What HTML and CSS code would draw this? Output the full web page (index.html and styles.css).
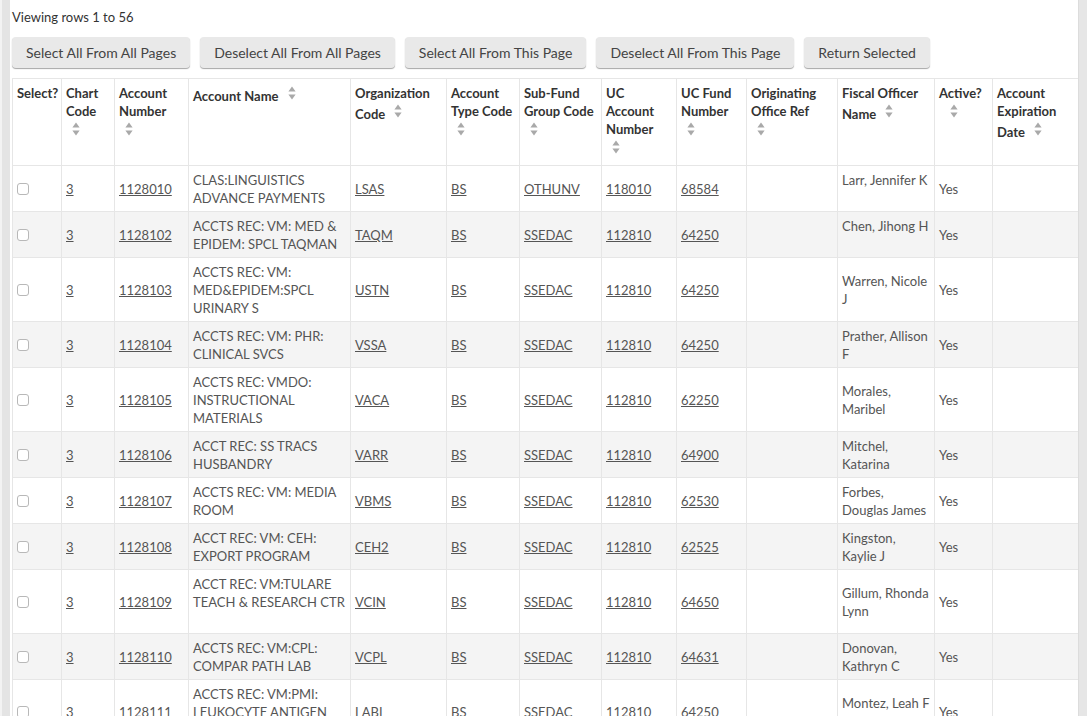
FILE: index.html
```html
<!DOCTYPE html>
<html>
<head>
<meta charset="utf-8">
<title>Account Lookup</title>
<link rel="stylesheet" href="styles.css">
</head>
<body>
<div class="page">
  <div class="edge-left"></div>
  <main class="main">
    <div class="viewing">Viewing rows 1 to 56</div>
    <div class="buttons">
      <button class="btn">Select All From All Pages</button>
      <button class="btn">Deselect All From All Pages</button>
      <button class="btn">Select All From This Page</button>
      <button class="btn">Deselect All From This Page</button>
      <button class="btn">Return Selected</button>
    </div>
    <table class="grid">
      <colgroup>
        <col class="w-sel"><col class="w-chart"><col class="w-acct"><col class="w-name"><col class="w-org"><col class="w-type"><col class="w-sub"><col class="w-ucacct"><col class="w-ucfund"><col class="w-orig"><col class="w-fo"><col class="w-act"><col class="w-exp">
      </colgroup>
      <thead>
        <tr>
          <th>Select?</th>
          <th>Chart<br>Code<br><svg class="sort" viewBox="0 0 8 14"><path d="M4 0.5 L7.6 5.4 H0.4 Z M0.4 8.6 H7.6 L4 13.5 Z"/></svg></th>
          <th>Account<br>Number<br><svg class="sort" viewBox="0 0 8 14"><path d="M4 0.5 L7.6 5.4 H0.4 Z M0.4 8.6 H7.6 L4 13.5 Z"/></svg></th>
          <th>Account Name <svg class="sort gap" viewBox="0 0 8 14"><path d="M4 0.5 L7.6 5.4 H0.4 Z M0.4 8.6 H7.6 L4 13.5 Z"/></svg></th>
          <th>Organization<br>Code <svg class="sort gap" viewBox="0 0 8 14"><path d="M4 0.5 L7.6 5.4 H0.4 Z M0.4 8.6 H7.6 L4 13.5 Z"/></svg></th>
          <th>Account<br>Type Code<br><svg class="sort" viewBox="0 0 8 14"><path d="M4 0.5 L7.6 5.4 H0.4 Z M0.4 8.6 H7.6 L4 13.5 Z"/></svg></th>
          <th>Sub-Fund<br>Group Code<br><svg class="sort" viewBox="0 0 8 14"><path d="M4 0.5 L7.6 5.4 H0.4 Z M0.4 8.6 H7.6 L4 13.5 Z"/></svg></th>
          <th>UC<br>Account<br>Number<br><svg class="sort" viewBox="0 0 8 14"><path d="M4 0.5 L7.6 5.4 H0.4 Z M0.4 8.6 H7.6 L4 13.5 Z"/></svg></th>
          <th>UC Fund<br>Number<br><svg class="sort" viewBox="0 0 8 14"><path d="M4 0.5 L7.6 5.4 H0.4 Z M0.4 8.6 H7.6 L4 13.5 Z"/></svg></th>
          <th>Originating<br>Office Ref<br><svg class="sort" viewBox="0 0 8 14"><path d="M4 0.5 L7.6 5.4 H0.4 Z M0.4 8.6 H7.6 L4 13.5 Z"/></svg></th>
          <th>Fiscal Officer<br>Name <svg class="sort gap" viewBox="0 0 8 14"><path d="M4 0.5 L7.6 5.4 H0.4 Z M0.4 8.6 H7.6 L4 13.5 Z"/></svg></th>
          <th>Active?<br><svg class="sort act" viewBox="0 0 8 14"><path d="M4 0.5 L7.6 5.4 H0.4 Z M0.4 8.6 H7.6 L4 13.5 Z"/></svg></th>
          <th>Account<br>Expiration<br>Date <svg class="sort gap" viewBox="0 0 8 14"><path d="M4 0.5 L7.6 5.4 H0.4 Z M0.4 8.6 H7.6 L4 13.5 Z"/></svg></th>
        </tr>
      </thead>
      <tbody>
        <tr>
          <td><input type="checkbox" class="cb"></td><td><a href="#">3</a></td><td><a href="#">1128010</a></td>
          <td>CLAS:LINGUISTICS<br>ADVANCE PAYMENTS</td><td><a href="#">LSAS</a></td><td><a href="#">BS</a></td><td><a href="#">OTHUNV</a></td><td><a href="#">118010</a></td><td><a href="#">68584</a></td><td></td>
          <td><div class="fo">Larr, Jennifer K</div></td><td>Yes</td><td></td>
        </tr>
        <tr>
          <td><input type="checkbox" class="cb"></td><td><a href="#">3</a></td><td><a href="#">1128102</a></td>
          <td>ACCTS REC: VM: MED &amp;<br>EPIDEM: SPCL TAQMAN</td><td><a href="#">TAQM</a></td><td><a href="#">BS</a></td><td><a href="#">SSEDAC</a></td><td><a href="#">112810</a></td><td><a href="#">64250</a></td><td></td>
          <td><div class="fo">Chen, Jihong H</div></td><td>Yes</td><td></td>
        </tr>
        <tr>
          <td><input type="checkbox" class="cb"></td><td><a href="#">3</a></td><td><a href="#">1128103</a></td>
          <td>ACCTS REC: VM:<br>MED&amp;EPIDEM:SPCL<br>URINARY S</td><td><a href="#">USTN</a></td><td><a href="#">BS</a></td><td><a href="#">SSEDAC</a></td><td><a href="#">112810</a></td><td><a href="#">64250</a></td><td></td>
          <td><div class="fo">Warren, Nicole<br>J</div></td><td>Yes</td><td></td>
        </tr>
        <tr>
          <td><input type="checkbox" class="cb"></td><td><a href="#">3</a></td><td><a href="#">1128104</a></td>
          <td>ACCTS REC: VM: PHR:<br>CLINICAL SVCS</td><td><a href="#">VSSA</a></td><td><a href="#">BS</a></td><td><a href="#">SSEDAC</a></td><td><a href="#">112810</a></td><td><a href="#">64250</a></td><td></td>
          <td><div class="fo">Prather, Allison<br>F</div></td><td>Yes</td><td></td>
        </tr>
        <tr>
          <td><input type="checkbox" class="cb"></td><td><a href="#">3</a></td><td><a href="#">1128105</a></td>
          <td>ACCTS REC: VMDO:<br>INSTRUCTIONAL<br>MATERIALS</td><td><a href="#">VACA</a></td><td><a href="#">BS</a></td><td><a href="#">SSEDAC</a></td><td><a href="#">112810</a></td><td><a href="#">62250</a></td><td></td>
          <td><div class="fo">Morales,<br>Maribel</div></td><td>Yes</td><td></td>
        </tr>
        <tr>
          <td><input type="checkbox" class="cb"></td><td><a href="#">3</a></td><td><a href="#">1128106</a></td>
          <td>ACCT REC: SS TRACS<br>HUSBANDRY</td><td><a href="#">VARR</a></td><td><a href="#">BS</a></td><td><a href="#">SSEDAC</a></td><td><a href="#">112810</a></td><td><a href="#">64900</a></td><td></td>
          <td><div class="fo">Mitchel,<br>Katarina</div></td><td>Yes</td><td></td>
        </tr>
        <tr>
          <td><input type="checkbox" class="cb"></td><td><a href="#">3</a></td><td><a href="#">1128107</a></td>
          <td>ACCTS REC: VM: MEDIA<br>ROOM</td><td><a href="#">VBMS</a></td><td><a href="#">BS</a></td><td><a href="#">SSEDAC</a></td><td><a href="#">112810</a></td><td><a href="#">62530</a></td><td></td>
          <td><div class="fo">Forbes,<br>Douglas James</div></td><td>Yes</td><td></td>
        </tr>
        <tr>
          <td><input type="checkbox" class="cb"></td><td><a href="#">3</a></td><td><a href="#">1128108</a></td>
          <td>ACCT REC: VM: CEH:<br>EXPORT PROGRAM</td><td><a href="#">CEH2</a></td><td><a href="#">BS</a></td><td><a href="#">SSEDAC</a></td><td><a href="#">112810</a></td><td><a href="#">62525</a></td><td></td>
          <td><div class="fo">Kingston,<br>Kaylie J</div></td><td>Yes</td><td></td>
        </tr>
        <tr>
          <td><input type="checkbox" class="cb"></td><td><a href="#">3</a></td><td><a href="#">1128109</a></td>
          <td><div class="name3">ACCT REC: VM:TULARE<br>TEACH &amp; RESEARCH CTR</div></td><td><a href="#">VCIN</a></td><td><a href="#">BS</a></td><td><a href="#">SSEDAC</a></td><td><a href="#">112810</a></td><td><a href="#">64650</a></td><td></td>
          <td><div class="fo">Gillum, Rhonda<br>Lynn</div></td><td>Yes</td><td></td>
        </tr>
        <tr>
          <td><input type="checkbox" class="cb"></td><td><a href="#">3</a></td><td><a href="#">1128110</a></td>
          <td>ACCTS REC: VM:CPL:<br>COMPAR PATH LAB</td><td><a href="#">VCPL</a></td><td><a href="#">BS</a></td><td><a href="#">SSEDAC</a></td><td><a href="#">112810</a></td><td><a href="#">64631</a></td><td></td>
          <td><div class="fo">Donovan,<br>Kathryn C</div></td><td>Yes</td><td></td>
        </tr>
        <tr>
          <td><input type="checkbox" class="cb"></td><td><a href="#">3</a></td><td><a href="#">1128111</a></td>
          <td>ACCTS REC: VM:PMI:<br>LEUKOCYTE ANTIGEN<br>LAB</td><td><a href="#">LABL</a></td><td><a href="#">BS</a></td><td><a href="#">SSEDAC</a></td><td><a href="#">112810</a></td><td><a href="#">64250</a></td><td></td>
          <td><div class="fo">Montez, Leah F</div></td><td>Yes</td><td></td>
        </tr>
      </tbody>
    </table>
  </main>
  <div class="edge-right"></div>
</div>
</body>
</html>
```

FILE: styles.css
```css
html, body {
  margin: 0;
  padding: 0;
  background: #ffffff;
}
body {
  font-family: Lato, "Open Sans", sans-serif;
  color: #555555;
  font-size: 13px;
  line-height: 18px;
  overflow: hidden;
}
.page {
  display: flex;
  min-height: 716px;
}
.edge-left {
  width: 8px;
  flex: none;
  background: #e4e4e4;
  border-left: 2px solid #f3f3f3;
}
.edge-right {
  width: 8px;
  flex: none;
  background: #e6e6e6;
  border-left: 1px solid #dcdcdc;
}
.main {
  flex: 1;
  padding: 8px 0 0 2px;
  min-width: 0;
}
.viewing {
  font-size: 13px;
  line-height: 18px;
  color: #333333;
}
.buttons {
  display: flex;
  gap: 10px;
  margin-top: 11px;
}
.btn {
  font-family: Lato, "Open Sans", sans-serif;
  font-size: 14px;
  color: #444444;
  background: #e9e9e9;
  border: none;
  border-radius: 4px;
  height: 31px;
  padding: 0 14px;
  box-shadow: 0 1px 1px rgba(0, 0, 0, 0.35);
}
.grid {
  margin-top: 10px;
  border-collapse: collapse;
  table-layout: fixed;
  width: 1068px;
}
.w-sel { width: 49px; }
.w-chart { width: 53px; }
.w-acct { width: 74px; }
.w-name { width: 162px; }
.w-org { width: 96px; }
.w-type { width: 73px; }
.w-sub { width: 82px; }
.w-ucacct { width: 75px; }
.w-ucfund { width: 70px; }
.w-orig { width: 91px; }
.w-fo { width: 97px; }
.w-act { width: 58px; }
.w-exp { width: 88px; }

.grid th, .grid td {
  border: 1px solid #e6e6e6;
  padding: 5px 4px 4px 4px;
  text-align: left;
  overflow: hidden;
}
.grid th {
  vertical-align: top;
  font-weight: 700;
  color: #333333;
  padding-bottom: 6px;
}
.grid td {
  vertical-align: middle;
}
.grid tbody tr:nth-child(even) td {
  background: #f4f4f4;
}
.grid a {
  color: #555555;
  text-decoration: underline;
}
.sort {
  width: 8px;
  height: 14px;
  fill: #a9a9a9;
  margin: 2px 0 0 6px;
  vertical-align: 1px;
}
.sort.act {
  margin-left: 11px;
}
.fo {
  min-height: 36px;
}
.name3 {
  min-height: 54px;
}
.cb {
  appearance: none;
  -webkit-appearance: none;
  width: 12px;
  height: 12px;
  margin: 0;
  border: 1px solid #b8b8b8;
  border-radius: 3px;
  background: #ffffff;
  vertical-align: middle;
  display: block;
}
```
